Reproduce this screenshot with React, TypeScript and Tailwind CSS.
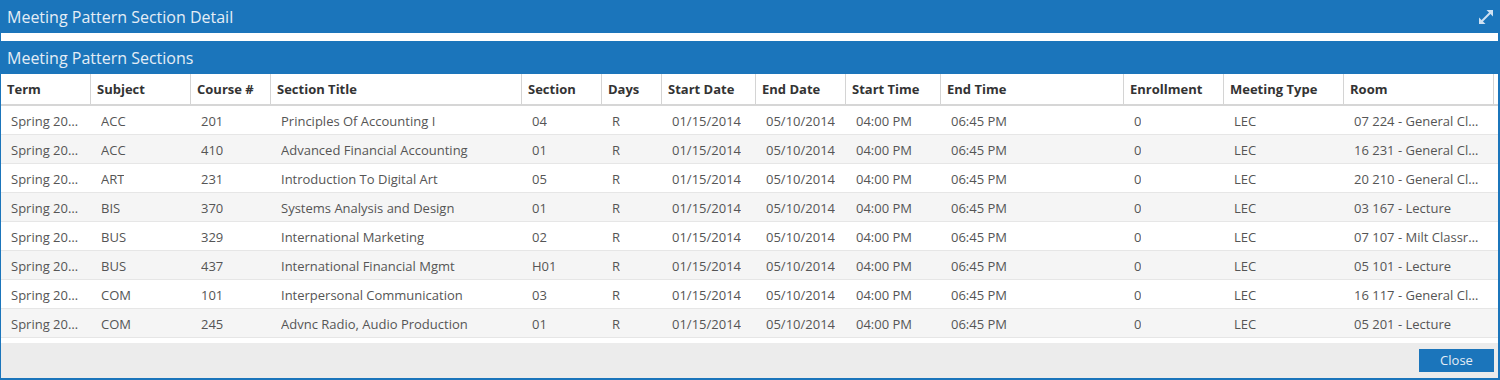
const columns = [
  { label: 'Term', width: 90 },
  { label: 'Subject', width: 100 },
  { label: 'Course #', width: 80 },
  { label: 'Section Title', width: 251 },
  { label: 'Section', width: 80 },
  { label: 'Days', width: 60 },
  { label: 'Start Date', width: 94 },
  { label: 'End Date', width: 90 },
  { label: 'Start Time', width: 95 },
  { label: 'End Time', width: 183 },
  { label: 'Enrollment', width: 100 },
  { label: 'Meeting Type', width: 120 },
  { label: 'Room', width: 150 },
];

const rows = [
  ['Spring 2014', 'ACC', '201', 'Principles Of Accounting I', '04', 'R', '01/15/2014', '05/10/2014', '04:00 PM', '06:45 PM', '0', 'LEC', '07 224 - General Classroom'],
  ['Spring 2014', 'ACC', '410', 'Advanced Financial Accounting', '01', 'R', '01/15/2014', '05/10/2014', '04:00 PM', '06:45 PM', '0', 'LEC', '16 231 - General Classroom'],
  ['Spring 2014', 'ART', '231', 'Introduction To Digital Art', '05', 'R', '01/15/2014', '05/10/2014', '04:00 PM', '06:45 PM', '0', 'LEC', '20 210 - General Classroom'],
  ['Spring 2014', 'BIS', '370', 'Systems Analysis and Design', '01', 'R', '01/15/2014', '05/10/2014', '04:00 PM', '06:45 PM', '0', 'LEC', '03 167 - Lecture'],
  ['Spring 2014', 'BUS', '329', 'International Marketing', '02', 'R', '01/15/2014', '05/10/2014', '04:00 PM', '06:45 PM', '0', 'LEC', '07 107 - Milt Classroom'],
  ['Spring 2014', 'BUS', '437', 'International Financial Mgmt', 'H01', 'R', '01/15/2014', '05/10/2014', '04:00 PM', '06:45 PM', '0', 'LEC', '05 101 - Lecture'],
  ['Spring 2014', 'COM', '101', 'Interpersonal Communication', '03', 'R', '01/15/2014', '05/10/2014', '04:00 PM', '06:45 PM', '0', 'LEC', '16 117 - General Classroom'],
  ['Spring 2014', 'COM', '245', 'Advnc Radio, Audio Production', '01', 'R', '01/15/2014', '05/10/2014', '04:00 PM', '06:45 PM', '0', 'LEC', '05 201 - Lecture'],
];

const gridCols =
  'grid grid-cols-[90px_100px_80px_251px_80px_60px_94px_90px_95px_183px_100px_120px_150px]';

const ExpandIcon = () => (
  <svg width="16" height="16" viewBox="0 0 16 16" className="text-[#cfe1f2]">
    <line x1="3.5" y1="12.5" x2="12.5" y2="3.5" stroke="currentColor" strokeWidth="2" />
    <polygon points="8.5,1 15,1 15,7.5" fill="currentColor" />
    <polygon points="1,8.5 1,15 7.5,15" fill="currentColor" />
  </svg>
);

const App = () => {
  return (
    <div className="h-[380px] w-[1500px] overflow-hidden bg-white font-['Open_Sans',sans-serif]">
      <header className="flex h-[33px] items-center justify-between bg-[#1b75bb] pl-[7px] pr-[6px]">
        <h1 className="text-[16px] text-[#e4edf6]">Meeting Pattern Section Detail</h1>
        <ExpandIcon />
      </header>
      <div className="flex h-[347px] flex-col border-b-2 border-l border-r-2 border-[#1b75bb]">
        <div className="h-[8px] bg-white" />
        <div className="flex h-[33px] items-center bg-[#1b75bb] pl-[6px]">
          <h2 className="text-[16px] text-[#e4edf6]">Meeting Pattern Sections</h2>
        </div>
        <div className={`${gridCols} h-[32px] border-b-2 border-[#d6d6d6] bg-white`}>
          {columns.map((col) => (
            <div
              key={col.label}
              className="flex items-center border-r border-[#d4d4d4] pl-[6px] pt-[2px] text-[13px] font-bold text-[#333]"
            >
              {col.label}
            </div>
          ))}
        </div>
        {rows.map((row, index) => (
          <div
            key={index}
            className={`${gridCols} h-[29px] border-b border-[#e6e6e6] ${index % 2 === 1 ? 'bg-[#f5f5f5]' : 'bg-white'}`}
          >
            {row.map((cell, i) => (
              <div
                key={i}
                className="flex min-w-0 items-center pl-[10px] pr-[11px] pt-[4px] text-[13px] text-[#555]"
              >
                <span className="truncate">{cell}</span>
              </div>
            ))}
          </div>
        ))}
        <div className="h-[5px] bg-white" />
        <footer className="flex flex-1 items-start justify-end bg-[#ececec] pr-[4px] pt-[6px]">
          <button className="h-[23px] w-[75px] bg-[#1b75bb] text-[13px] text-[#e4edf6]">
            Close
          </button>
        </footer>
      </div>
    </div>
  );
};

export default App;
